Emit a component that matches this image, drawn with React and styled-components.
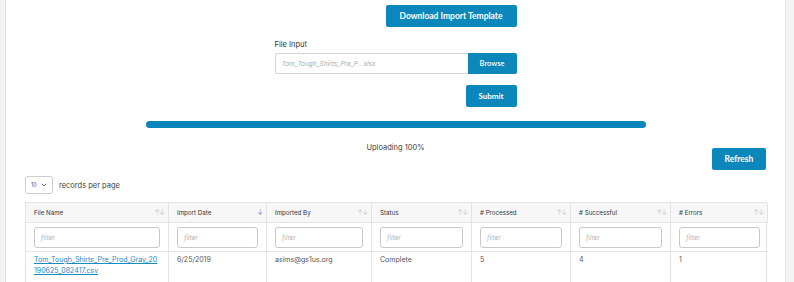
import React from 'react'
import styled, {createGlobalStyle} from 'styled-components'

const GlobalStyle = createGlobalStyle`
  html, body {
    margin: 0;
    padding: 0;
    background: #f3f3f3;
    font-family: 'Inter', 'Liberation Sans', sans-serif;
    color: #333;
  }
`

const Page = styled.div`
  display: flex;
  height: 282px;
  overflow: hidden;
`

const Panel = styled.main`
  margin-left: 5px;
  width: 781px;
  background: #fff;
  border-left: 1px solid #e2e2e2;
  border-right: 1px solid #e2e2e2;
  padding: 5px 19px 0 19px;
  box-sizing: border-box;
`

const Form = styled.div`
  width: 242px;
  margin: 0 auto;
  display: flex;
  flex-direction: column;
  align-items: flex-end;
`

const Button = styled.button`
  background: #0b87bc;
  color: #fff;
  border: none;
  border-radius: 2px;
  font-family: 'Lato', 'Liberation Sans', sans-serif;
  font-weight: 700;
  font-size: ${p => p.$size || 8.5}px;
  height: 22px;
  padding: 0 ${p => p.$pad || 12}px;
  width: ${p => (p.$w ? `${p.$w}px` : 'auto')};
  margin-top: ${p => p.$mt || 0}px;
  cursor: pointer;
`

const Label = styled.label`
  align-self: flex-start;
  font-size: 7.5px;
  color: #333;
  margin-top: 13px;
  margin-bottom: 4px;
`

const FileRow = styled.div`
  display: flex;
  width: 242px;
  height: 21px;
`

const FileName = styled.div`
  flex: 1;
  border: 1px solid #d3d3d3;
  border-right: none;
  border-radius: 2px 0 0 2px;
  font-style: italic;
  font-size: 6.5px;
  color: #aaa;
  display: flex;
  align-items: center;
  padding-left: 6px;
`

const BrowseButton = styled(Button)`
  height: 21px;
  width: 49px;
  padding: 0;
  border-radius: 0 2px 2px 0;
  font-weight: 600;
  font-size: 7.5px;
`

const Progress = styled.div`
  width: 500px;
  height: 7px;
  border-radius: 4px;
  background: #0b86bb;
  margin: 14px auto 0;
`

const Status = styled.div`
  text-align: center;
  font-size: 7.5px;
  color: #444;
  margin-top: 15px;
  height: 10px;
`

const Toolbar = styled.div`
  display: flex;
  justify-content: flex-end;
  margin-top: -5px;
`

const PageSize = styled.div`
  display: flex;
  align-items: center;
  gap: 6px;
  margin-top: 6px;
  font-size: 7.5px;
  color: #444;
`

const Select = styled.div`
  width: 28px;
  height: 18px;
  box-sizing: border-box;
  border: 1px solid #ccc;
  border-radius: 3px;
  display: flex;
  align-items: center;
  justify-content: space-between;
  padding: 0 5px 0 5px;
  font-size: 5.5px;
  color: #555;
`

const Table = styled.div`
  margin-top: 8px;
  display: grid;
  grid-template-columns: 143px 98px 105px 100px 99px 100px 97px;
  border: 1px solid #e4e4e4;
  border-bottom: none;
  width: 742px;
  box-sizing: border-box;
`

const Head = styled.div`
  height: 19px;
  background: #f7f7f7;
  border-right: 1px solid #e4e4e4;
  border-bottom: 1px solid #e4e4e4;
  display: flex;
  align-items: center;
  justify-content: space-between;
  padding: 0 4px 0 8px;
  font-size: 6.2px;
  color: #333;
  &:last-child {
    border-right: none;
  }
`

const Sort = styled.span`
  font-size: 7px;
  letter-spacing: -1px;
  color: ${p => (p.$active ? '#9a86e0' : '#cfcfcf')};
`

const FilterCell = styled.div`
  border-right: 1px solid #e4e4e4;
  border-bottom: 1px solid #e4e4e4;
  padding: 4px 8px 3px 8px;
  &:nth-child(7n) {
    border-right: none;
  }
`

const FilterInput = styled.div`
  height: 21px;
  box-sizing: border-box;
  border: 1px solid #c9c9c9;
  border-radius: 3px;
  display: flex;
  align-items: center;
  padding-left: 6px;
  font-style: italic;
  font-size: 6.5px;
  color: #b5b5b5;
`

const Cell = styled.div`
  border-right: 1px solid #e4e4e4;
  border-bottom: 1px solid #e4e4e4;
  padding: 2px 8px 8px 8px;
  font-size: 7px;
  line-height: 11px;
  color: #555;
  height: 29px;
  &:nth-child(7n) {
    border-right: none;
  }
`

const FileLink = styled.a`
  color: #1a8ac2;
  text-decoration: underline;
  word-break: break-all;
`

const columns = [
  {name: 'File Name'},
  {name: 'Import Date', active: true},
  {name: 'Imported By'},
  {name: 'Status'},
  {name: '# Processed'},
  {name: '# Successful'},
  {name: '# Errors'},
]

const Chevron = () => (
  <svg width="6" height="4" viewBox="0 0 6 4">
    <path d="M0.8 0.8 L3 3 L5.2 0.8" stroke="#555" strokeWidth="0.9" fill="none" />
  </svg>
)

export default function App() {
  return (
    <Page>
      <GlobalStyle />
      <Panel>
        <Form>
          <Button $w={131} $size={8.5}>Download Import Template</Button>
          <Label>File Input</Label>
          <FileRow>
            <FileName>Tom_Tough_Shirts_Pre_P...xlsx</FileName>
            <BrowseButton>Browse</BrowseButton>
          </FileRow>
          <Button $w={51} $mt={11} $size={8}>Submit</Button>
        </Form>
        <Progress />
        <Status>Uploading 100%</Status>
        <Toolbar>
          <Button $w={54} $size={8.5}>Refresh</Button>
        </Toolbar>
        <PageSize>
          <Select>
            <span>10</span>
            <Chevron />
          </Select>
          records per page
        </PageSize>
        <Table>
          {columns.map(c => (
            <Head key={c.name}>
              <span>{c.name}</span>
              <Sort $active={c.active}>{c.active ? '↓' : '↑↓'}</Sort>
            </Head>
          ))}
          {columns.map(c => (
            <FilterCell key={c.name}>
              <FilterInput>filter</FilterInput>
            </FilterCell>
          ))}
          <Cell>
            <FileLink href="#">Tom_Tough_Shirts_Pre_Prod_Gray_20190625_082417.csv</FileLink>
          </Cell>
          <Cell>6/25/2019</Cell>
          <Cell>asims@gs1us.org</Cell>
          <Cell>Complete</Cell>
          <Cell>5</Cell>
          <Cell>4</Cell>
          <Cell>1</Cell>
        </Table>
      </Panel>
    </Page>
  )
}
